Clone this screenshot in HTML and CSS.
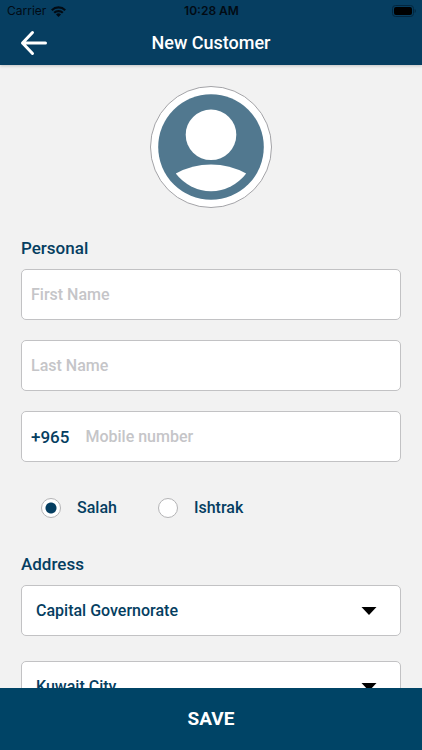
FILE: index.html
```html
<!DOCTYPE html>
<html lang="en">
<head>
  <meta charset="utf-8">
  <meta name="viewport" content="width=device-width, initial-scale=1">
  <title>New Customer</title>
  <link rel="stylesheet" href="styles.css">
</head>
<body>
  <header class="header">
    <div class="status">
      <div class="carrier">
        <span>Carrier</span>
        <svg class="wifi" viewBox="0 0 15 11" aria-hidden="true">
          <path d="M0.800 4.200a9.500 9.500 0 0 1 13.400 0M3.200 6.800a6.100 6.100 0 0 1 8.600 0" fill="none" stroke="currentColor" stroke-width="2.200"/>
          <path d="M7.500 11L5 8.500a3.600 3.600 0 0 1 5 0z" fill="currentColor"/>
        </svg>
      </div>
      <time class="clock">10:28 AM</time>
      <svg class="battery" viewBox="0 0 24 12" aria-hidden="true">
        <rect x="0.500" y="0.500" width="21" height="11" rx="3" fill="none" stroke="#03263e"/>
        <rect x="2" y="2" width="18" height="8" rx="2"/>
        <path d="M22.700 4v4q1.100-.6 1.100-2t-1.100-2z" fill="#03263e"/>
      </svg>
    </div>
    <div class="navbar">
      <button class="back" type="button" aria-label="Back">
        <svg class="arrow" viewBox="0 0 28 26" aria-hidden="true">
          <path d="M25.500 13H2.500M12.500 2.500L2.500 13l10 10.500" fill="none" stroke="currentColor" stroke-width="3" stroke-linecap="round" stroke-linejoin="round"/>
        </svg>
      </button>
      <h1 class="title">New Customer</h1>
    </div>
  </header>

  <main class="content">
    <form id="customer" class="form">
      <button class="avatar" type="button" aria-label="Customer photo">
        <svg class="portrait" viewBox="0 0 122 122" aria-hidden="true">
          <circle cx="61" cy="61" r="60.500" fill="#fff" stroke="#a3a3a7"/>
          <circle cx="61" cy="61" r="52.800" fill="#51788f"/>
          <circle cx="61" cy="48.800" r="25.300" fill="#fff"/>
          <path d="M25.800 87.400A73.300 73.300 0 0 1 96.200 87.400A43.800 43.800 0 0 1 25.800 87.400z" fill="#fff"/>
        </svg>
      </button>

      <h2 class="heading">Personal</h2>
      <div class="fields">
        <input class="box" type="text" placeholder="First Name" aria-label="First Name">
        <input class="box" type="text" placeholder="Last Name" aria-label="Last Name">
        <div class="box phone">
          <label class="prefix" for="mobile">+965</label>
          <input class="number" id="mobile" type="tel" placeholder="Mobile number">
        </div>
      </div>

      <div class="choices">
        <label class="choice"><input class="radio" type="radio" name="kind" checked>Salah</label>
        <label class="choice"><input class="radio" type="radio" name="kind">Ishtrak</label>
      </div>

      <h2 class="heading">Address</h2>
      <div class="selects">
        <div class="picker">
          <select class="box select" aria-label="Governorate"><option>Capital Governorate</option></select>
          <svg class="caret" viewBox="0 0 16 8" aria-hidden="true"><path d="M0.500 0h15L8 8z"/></svg>
        </div>
        <div class="picker">
          <select class="box select" aria-label="City"><option>Kuwait City</option></select>
          <svg class="caret" viewBox="0 0 16 8" aria-hidden="true"><path d="M0.500 0h15L8 8z"/></svg>
        </div>
      </div>
    </form>
  </main>

  <button class="save" type="submit" form="customer">SAVE</button>
</body>
</html>
```
FILE: styles.css
```css
* {
  box-sizing: border-box;
}

body {
  margin: 0;
  height: 100vh;
  display: flex;
  flex-direction: column;
  background: #f2f2f2;
  color: #053e61;
  font: 500 16px/20px Roboto, sans-serif;
}

button,
input,
select {
  font: inherit;
  color: inherit;
}

.header {
  flex: none;
  background: #063e61;
  box-shadow: 0 1px 3px rgba(0, 0, 0, 0.2);
  z-index: 1;
}

.status {
  display: grid;
  grid-template-columns: 1fr auto 1fr;
  align-items: center;
  height: 22px;
  padding: 0 6px 0 7px;
  color: #020b14;
  font: 400 12px/16px Inter, sans-serif;
}

.carrier {
  display: flex;
  align-items: center;
  gap: 5px;
}

.wifi {
  width: 15px;
  height: 11px;
}

.clock {
  font-weight: 600;
}

.battery {
  justify-self: end;
  width: 24px;
  height: 12px;
}

.navbar {
  display: grid;
  grid-template-columns: 1fr auto 1fr;
  align-items: center;
  height: 43px;
  padding: 0 20px 2px;
  color: #fff;
}

.back {
  justify-self: start;
  padding: 0;
  border: 0;
  background: none;
}

.arrow {
  display: block;
  width: 28px;
  height: 26px;
}

.title {
  margin: 0;
  font-size: 18px;
  font-weight: 500;
}

.content {
  flex: 1;
  min-height: 0;
  overflow-y: auto;
  scrollbar-width: none;
}

.form {
  display: flex;
  flex-direction: column;
  padding: 21px 21px 24px;
}

.avatar {
  align-self: center;
  margin-bottom: 30px;
  padding: 0;
  border: 0;
  border-radius: 50%;
  background: none;
}

.portrait {
  display: block;
  width: 122px;
  height: 122px;
}

.heading {
  margin: 0 0 11px;
  font-size: 17px;
  font-weight: 500;
  line-height: 20px;
}

.fields {
  display: grid;
  gap: 20px;
}

.box {
  width: 100%;
  height: 51px;
  padding: 0 9px;
  border: 1px solid #c2c2c4;
  border-radius: 5px;
  background: #fff;
}

.phone {
  display: flex;
  align-items: center;
  gap: 16px;
}

.prefix {
  font-size: 17px;
}

.number {
  flex: 1;
  min-width: 0;
  padding: 0;
  border: 0;
  background: none;
}

::placeholder {
  color: #c5c5c8;
  opacity: 1;
}

.choices {
  display: flex;
  gap: 41px;
  padding: 36px 20px;
}

.choice {
  display: flex;
  align-items: center;
  gap: 16px;
}

.radio {
  appearance: none;
  width: 20px;
  height: 20px;
  margin: 0;
  border: 1px solid #b4b4b6;
  border-radius: 50%;
  background: #fff;
}

.radio:checked {
  background: radial-gradient(circle, #053e61 5px, #fff 6px);
}

.selects {
  display: grid;
  gap: 25px;
}

.picker {
  display: grid;
  align-items: center;
}

.picker > * {
  grid-area: 1 / 1;
}

.select {
  appearance: none;
  padding: 0 48px 0 14px;
}

.caret {
  justify-self: end;
  width: 16px;
  height: 8px;
  margin-right: 24px;
  pointer-events: none;
}

.save {
  flex: none;
  height: 62px;
  border: 0;
  background: #004466;
  color: #fff;
  font-size: 19px;
  font-weight: 700;
}
```
